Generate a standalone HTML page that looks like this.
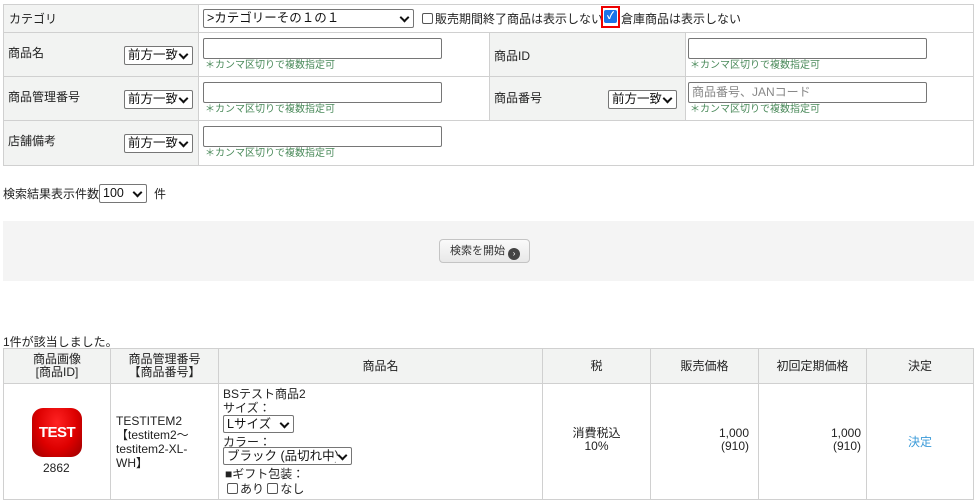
<!DOCTYPE html>
<html><head><meta charset="utf-8"><style>
*{box-sizing:border-box;margin:0;padding:0}
body{width:977px;height:502px;background:#fff;font-family:"Liberation Sans","Noto Sans CJK JP",sans-serif;font-size:12px;color:#222;position:relative;overflow:hidden}
.a{position:absolute}
.cell{position:absolute;border:1px solid #d0d0d0}
.lb{background:#f2f3f2}
.sel{position:absolute;border:1px solid #767676;border-radius:2px;background:#fff;font-size:12.5px;line-height:16px;padding-left:3px;color:#111;white-space:nowrap;overflow:hidden}
.sel::after{content:"";position:absolute;right:5px;top:4px;width:5px;height:5px;border-right:2px solid #111;border-bottom:2px solid #111;transform:rotate(45deg);background:#fff;box-shadow:3px 3px 0 3px #fff}
.inp{position:absolute;border:1px solid #767676;border-radius:2px;background:#fff;height:21px;width:239px}
.note{position:absolute;font-size:10px;color:#4a8a5a;line-height:11px}
.cb{display:inline-block;width:11px;height:11px;border:1px solid #555;border-radius:2px;vertical-align:-1px;background:#fff;margin-right:2px}
.th{position:absolute;background:#f2f3f2;border:1px solid #d0d0d0;text-align:center;line-height:13px;display:flex;align-items:center;justify-content:center}
.td{position:absolute;border:1px solid #d0d0d0}
</style></head><body>
<div class="cell lb" style="left:3px;top:4px;width:196px;height:29px"></div>
<div class="cell" style="left:198px;top:4px;width:776px;height:29px"></div>
<div class="a" style="left:9px;top:10px">カテゴリ</div>
<div class="sel" style="left:203px;top:9px;width:211px;height:19px">&gt;カテゴリーその１の１</div>
<div class="a" style="left:422px;top:10px"><span class="cb"></span>販売期間終了商品は表示しない</div>
<div class="a" style="left:601px;top:6px;width:19px;height:22px;border:2px solid #e00"></div>
<div class="a" style="left:604px;top:10px;width:13px;height:13px;background:#1a73e8;border-radius:2px;color:#fff;font-size:10px;line-height:13px;text-align:center;font-weight:bold">✓</div>
<div class="a" style="left:621px;top:10px">倉庫商品は表示しない</div>

<div class="cell lb" style="left:3px;top:32px;width:196px;height:45px"></div>
<div class="cell" style="left:198px;top:32px;width:292px;height:45px"></div>
<div class="cell lb" style="left:489px;top:32px;width:197px;height:45px"></div>
<div class="cell" style="left:685px;top:32px;width:289px;height:45px"></div>
<div class="cell lb" style="left:3px;top:76px;width:196px;height:45px"></div>
<div class="cell" style="left:198px;top:76px;width:292px;height:45px"></div>
<div class="cell lb" style="left:489px;top:76px;width:197px;height:45px"></div>
<div class="cell" style="left:685px;top:76px;width:289px;height:45px"></div>
<div class="cell lb" style="left:3px;top:120px;width:196px;height:46px"></div>
<div class="cell" style="left:198px;top:120px;width:776px;height:46px"></div>

<div class="a" style="left:8px;top:44px">商品名</div>
<div class="sel" style="left:124px;top:46px;width:69px;height:19px">前方一致</div>
<div class="inp" style="left:203px;top:38px"></div>
<div class="note" style="left:205px;top:60px">＊カンマ区切りで複数指定可</div>
<div class="a" style="left:494px;top:47px">商品ID</div>
<div class="inp" style="left:688px;top:38px"></div>
<div class="note" style="left:690px;top:60px">＊カンマ区切りで複数指定可</div>

<div class="a" style="left:8px;top:88px">商品管理番号</div>
<div class="sel" style="left:124px;top:90px;width:69px;height:19px">前方一致</div>
<div class="inp" style="left:203px;top:82px"></div>
<div class="note" style="left:205px;top:104px">＊カンマ区切りで複数指定可</div>
<div class="a" style="left:494px;top:89px">商品番号</div>
<div class="sel" style="left:608px;top:90px;width:69px;height:19px">前方一致</div>
<div class="inp" style="left:688px;top:82px;color:#888;padding-left:3px;line-height:19px">商品番号、JANコード</div>
<div class="note" style="left:690px;top:104px">＊カンマ区切りで複数指定可</div>

<div class="a" style="left:8px;top:132px">店舗備考</div>
<div class="sel" style="left:124px;top:134px;width:69px;height:19px">前方一致</div>
<div class="inp" style="left:203px;top:126px"></div>
<div class="note" style="left:205px;top:148px">＊カンマ区切りで複数指定可</div>

<div class="a" style="left:3px;top:185px">検索結果表示件数</div>
<div class="sel" style="left:99px;top:184px;width:48px;height:19px">100</div>
<div class="a" style="left:154px;top:185px">件</div>

<div class="a" style="left:3px;top:221px;width:971px;height:60px;background:#f4f4f4"></div>
<div class="a" style="left:439px;top:239px;width:91px;height:24px;border:1px solid #c4c4c4;border-radius:4px;background:linear-gradient(#fafafa,#e8e8e8);font-size:11px;line-height:22px;padding-left:10px;color:#333">検索を開始 <span style="display:inline-block;width:12px;height:12px;border-radius:50%;background:#444;color:#fff;font-size:8px;line-height:12px;text-align:center;vertical-align:-2px">›</span></div>

<div class="a" style="left:3px;top:333px">1件が該当しました。</div>
<div class="th" style="left:3px;top:348px;width:108px;height:36px">商品画像<br>[商品ID]</div>
<div class="th" style="left:110px;top:348px;width:109px;height:36px">商品管理番号<br>【商品番号】</div>
<div class="th" style="left:218px;top:348px;width:325px;height:36px">商品名</div>
<div class="th" style="left:542px;top:348px;width:109px;height:36px">税</div>
<div class="th" style="left:650px;top:348px;width:109px;height:36px">販売価格</div>
<div class="th" style="left:758px;top:348px;width:109px;height:36px">初回定期価格</div>
<div class="th" style="left:866px;top:348px;width:108px;height:36px">決定</div>
<div class="td" style="left:3px;top:383px;width:108px;height:117px"></div>
<div class="td" style="left:110px;top:383px;width:109px;height:117px"></div>
<div class="td" style="left:218px;top:383px;width:325px;height:117px"></div>
<div class="td" style="left:542px;top:383px;width:109px;height:117px"></div>
<div class="td" style="left:650px;top:383px;width:109px;height:117px"></div>
<div class="td" style="left:758px;top:383px;width:109px;height:117px"></div>
<div class="td" style="left:866px;top:383px;width:108px;height:117px"></div>

<div class="a" style="left:32px;top:408px;width:50px;height:49px;border-radius:11px;background:radial-gradient(ellipse at 50% 30%,#f22 0%,#d00 55%,#900 100%);color:#fff;font-weight:bold;font-size:15px;line-height:49px;text-align:center;letter-spacing:-0.5px">TEST</div>
<div class="a" style="left:43px;top:461px">2862</div>
<div class="a" style="left:116px;top:414px;line-height:14px">TESTITEM2<br>【testitem2～<br>testitem2-XL-<br>WH】</div>
<div class="a" style="left:223px;top:387px;line-height:14px">BSテスト商品2<br>サイズ：</div>
<div class="sel" style="left:223px;top:415px;width:71px;height:18px">Lサイズ</div>
<div class="a" style="left:223px;top:433px">カラー：</div>
<div class="sel" style="left:223px;top:447px;width:129px;height:18px">ブラック (品切れ中)</div>
<div class="a" style="left:225px;top:465px">■ギフト包装：</div>
<div class="a" style="left:227px;top:480px"><span class="cb"></span>あり <span class="cb"></span>なし</div>
<div class="a" style="left:542px;top:427px;width:109px;text-align:center;line-height:13px">消費税込<br>10%</div>
<div class="a" style="left:650px;top:427px;width:99px;text-align:right;line-height:13px">1,000<br>(910)</div>
<div class="a" style="left:758px;top:427px;width:103px;text-align:right;line-height:13px">1,000<br>(910)</div>
<div class="a" style="left:866px;top:433px;width:108px;text-align:center;color:#3a9ad9">決定</div>
</body></html>
